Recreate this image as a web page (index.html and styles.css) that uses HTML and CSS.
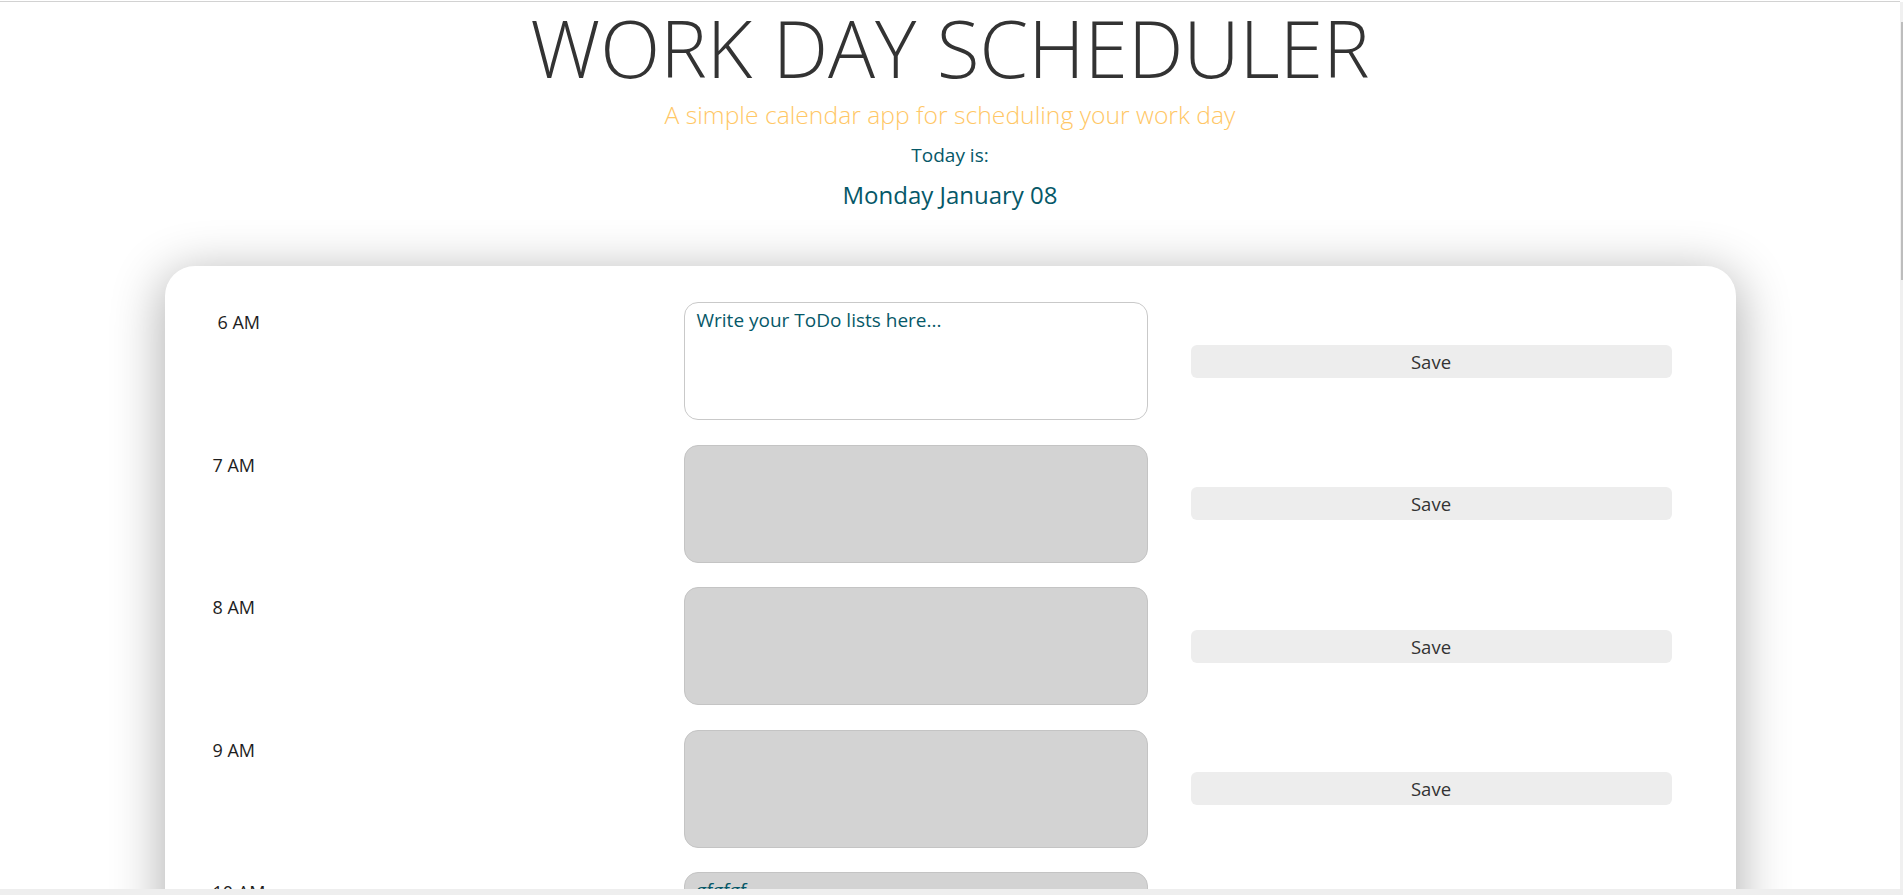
FILE: index.html
```html
<!DOCTYPE html>
<html lang="en">
<head>
<meta charset="utf-8">
<title>Work Day Scheduler</title>
<link rel="stylesheet" href="styles.css">
</head>
<body>
<div class="page">
  <header class="header">
    <h1 class="title">WORK DAY SCHEDULER</h1>
    <p class="lead">A simple calendar app for scheduling your work day</p>
    <p class="today-label">Today is:</p>
    <p class="today">Monday January 08</p>
  </header>
  <main class="card">
    <div class="row">
      <div class="hour first">6 AM</div>
      <textarea class="desc present" placeholder="Write your ToDo lists here..."></textarea>
      <button class="save">Save</button>
    </div>
    <div class="row">
      <div class="hour">7 AM</div>
      <textarea class="desc past"></textarea>
      <button class="save">Save</button>
    </div>
    <div class="row">
      <div class="hour">8 AM</div>
      <textarea class="desc past"></textarea>
      <button class="save">Save</button>
    </div>
    <div class="row">
      <div class="hour">9 AM</div>
      <textarea class="desc past"></textarea>
      <button class="save">Save</button>
    </div>
    <div class="row">
      <div class="hour">10 AM</div>
      <textarea class="desc past">gfgfgf</textarea>
      <button class="save">Save</button>
    </div>
    <div class="row">
      <div class="hour">11 AM</div>
      <textarea class="desc past"></textarea>
      <button class="save">Save</button>
    </div>
  </main>
</div>
<div class="topline"></div>
<div class="vscroll"><div class="thumb"></div></div>
<div class="hscroll"></div>
</body>
</html>
```

FILE: styles.css
```css
html, body {
  margin: 0;
  height: 100%;
  overflow: hidden;
  background: #ffffff;
}

body {
  font-family: "Open Sans", "Noto Sans", sans-serif;
  color: #222222;
}

.page {
  width: 1900px;
}

.header {
  display: flex;
  flex-direction: column;
  align-items: center;
  padding-top: 1px;
}

.title {
  margin: 0;
  font-size: 78.4px;
  font-weight: 300;
  line-height: 1.2;
  color: #333333;
}

.lead {
  margin: 3px 0 0;
  font-size: 24.7px;
  font-weight: 300;
  line-height: 1.362;
  color: #ffc766;
}

.today-label {
  margin: 11px 0 0;
  font-size: 19px;
  font-weight: 500;
  line-height: 1.362;
  color: #065868;
}

.today {
  margin: 10px 0 0;
  font-size: 24px;
  font-weight: 400;
  line-height: 1.362;
  color: #065868;
}

.card {
  box-sizing: border-box;
  width: 1571px;
  margin: 55px auto 0;
  padding: 36px 64px 40px 48px;
  background: #ffffff;
  border-radius: 30px;
  box-shadow: 0 10px 50px 4px rgba(0, 0, 0, 0.3);
  display: flex;
  flex-direction: column;
  gap: 24.5px;
}

.row {
  display: grid;
  grid-template-columns: 428px 464px 481px;
  column-gap: 43px;
  height: 118px;
}

.hour {
  padding-top: 8px;
  font-size: 18px;
  font-weight: 500;
  line-height: 1.362;
  color: #1e1e1e;
}

.hour.first {
  padding-left: 5px;
}

.desc {
  box-sizing: border-box;
  height: 118px;
  margin: 0;
  padding: 5px 12px;
  border: 1px solid #c9c9c9;
  border-radius: 14px;
  font-family: "Open Sans", "Noto Sans", sans-serif;
  font-size: 19px;
  font-weight: 500;
  line-height: 1.3;
  color: #065868;
  resize: none;
  outline: none;
}

.desc::placeholder {
  color: #065868;
  opacity: 1;
}

.present {
  background: #ffffff;
}

.past {
  background: #d3d3d3;
  border-color: #c4c4c4;
}

.save {
  align-self: center;
  height: 33px;
  padding: 0;
  border: none;
  border-radius: 6px;
  background: #ededed;
  font-family: "Open Sans", "Noto Sans", sans-serif;
  font-size: 18.5px;
  font-weight: 400;
  color: #333333;
}

.topline {
  position: fixed;
  top: 1px;
  left: 0;
  width: 1900px;
  height: 1px;
  background: #d2d2d2;
}

.vscroll {
  position: fixed;
  top: 2px;
  right: 0;
  width: 3px;
  bottom: 6px;
  background: #f0f0f0;
}

.thumb {
  margin-top: 20px;
  margin-left: 1px;
  width: 2px;
  height: 258px;
  background: #bdbdbd;
}

.hscroll {
  position: fixed;
  left: 0;
  right: 0;
  bottom: 0;
  height: 6px;
  background: #eeeeee;
}
```
